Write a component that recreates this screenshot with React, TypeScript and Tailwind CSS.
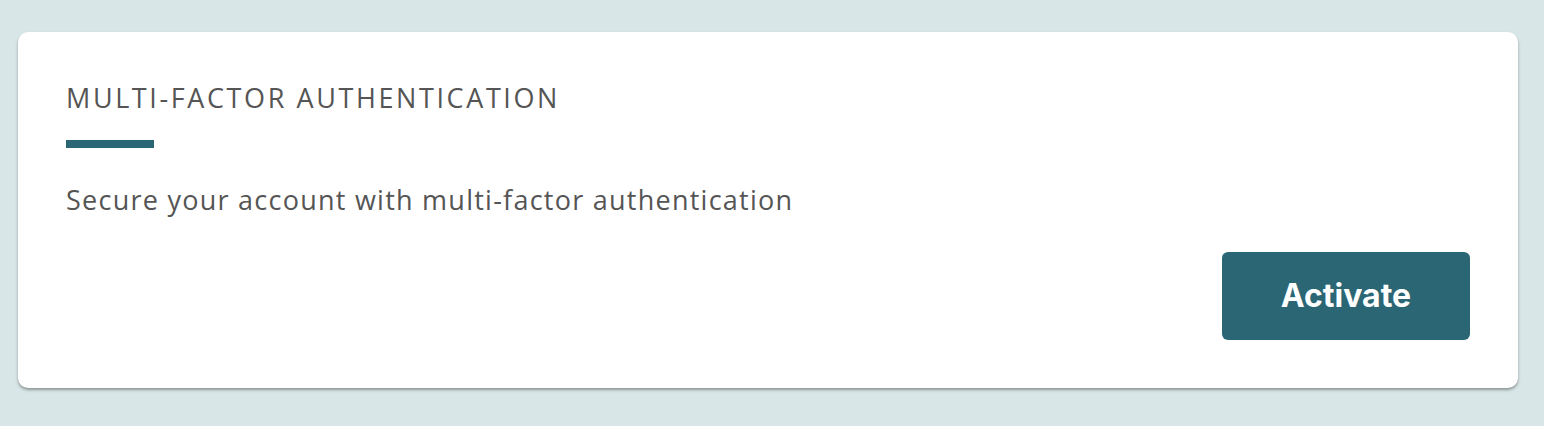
export default function App() {
  return (
    <div className="min-h-[426px] w-full bg-[#d9e6e7] pl-[18px] pr-[26px] pt-8 pb-9 font-['Open_Sans',sans-serif]">
      <section className="rounded-[10px] bg-white px-12 pt-[46px] pb-12 shadow-[0_2px_3px_rgba(0,0,0,0.35)]">
        <h2 className="text-[27px] leading-[40px] font-normal uppercase tracking-[2.6px] text-[#555555]">
          Multi-Factor Authentication
        </h2>
        <div className="mt-[22px] h-2 w-[88px] bg-[#2b6675]" />
        <p className="mt-[34px] text-[27px] leading-[36px] tracking-[1.25px] text-[#555555]">
          Secure your account with multi-factor authentication
        </p>
        <div className="mt-[34px] flex justify-end">
          <button className="h-[88px] w-[248px] rounded-md bg-[#2b6675] font-['Inter',sans-serif] text-[32px] font-bold text-white">
            Activate
          </button>
        </div>
      </section>
    </div>
  );
}
